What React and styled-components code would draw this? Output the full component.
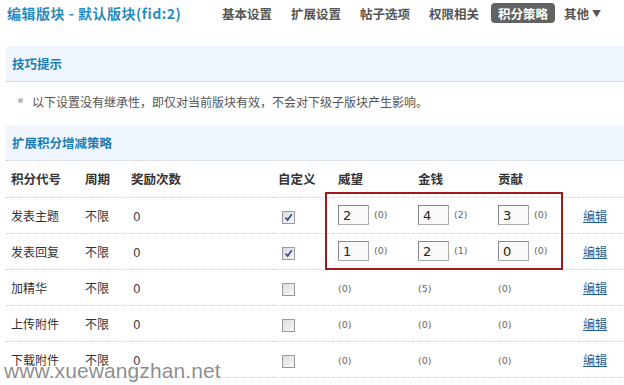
import React from "react";
import styled, { createGlobalStyle } from "styled-components";

const Global = createGlobalStyle`
  html, body { margin: 0; padding: 0; background: #fff; }
  body { font-family: "Noto Sans CJK SC", "Liberation Sans", sans-serif; font-size: 12px; color: #333; overflow: hidden; }
`;

const Page = styled.div`
  position: relative;
  width: 624px;
  height: 385px;
  overflow: hidden;
  padding-left: 6px;
  box-sizing: border-box;
`;

const TopBar = styled.div`
  height: 46px;
  display: flex;
  align-items: flex-start;
  padding-top: 3px;
  box-sizing: border-box;
`;

const Title = styled.h1`
  margin: 0 0 0 1px;
  font-size: 14px;
  line-height: 20px;
  font-weight: bold;
  color: #2a8cc0;
  letter-spacing: 0.5px;
  width: 208px;
  white-space: nowrap;
`;

const Nav = styled.nav`
  display: flex;
  gap: 2px;
  align-items: center;
`;

const NavItem = styled.span`
  display: inline-flex;
  align-items: center;
  height: 20px;
  padding: 0 7px;
  border-radius: 4px;
  font-weight: bold;
  font-size: 12.5px;
  color: ${(p) => (p.$active ? "#fff" : "#555")};
  background: ${(p) => (p.$active ? "#626262" : "transparent")};
  margin-right: ${(p) => (p.$gap ? p.$gap : 0)}px;
  white-space: nowrap;
`;

const Caret = styled.span`
  font-size: 9px;
  margin-left: 3px;
  color: #555;
`;

const SectionHead = styled.div`
  height: 36px;
  background: #eff6fd;
  border-bottom: 1px dotted #bfd0dd;
  box-sizing: border-box;
  display: flex;
  align-items: center;
  padding-left: 6px;
  font-weight: bold;
  font-size: 12.5px;
  color: #1c7db4;
`;

const TipRow = styled.div`
  height: 43px;
  display: flex;
  align-items: center;
  padding-left: 12px;
  padding-bottom: 4px;
  box-sizing: border-box;
  color: #555;
  font-size: 12px;
`;

const Bullet = styled.span`
  width: 5px;
  height: 5px;
  border-radius: 50%;
  background: #bbb;
  margin-right: 9px;
  margin-top: -2px;
`;

const Table = styled.table`
  border-collapse: collapse;
  table-layout: fixed;
  width: 618px;
`;

const Th = styled.th`
  height: 36px;
  text-align: left;
  padding: 0 0 0 5px;
  font-weight: bold;
  font-size: 12.5px;
  color: #333;
  border-bottom: 1px dotted #c9d6e0;
  box-sizing: border-box;
`;

const Td = styled.td`
  height: 36px;
  padding: 0 0 0 5px;
  border-bottom: 1px dotted #c9d6e0;
  box-sizing: border-box;
  white-space: nowrap;
  color: #333;
`;

const Num = styled.span`
  font-family: "DejaVu Sans", "Liberation Sans", sans-serif;
  font-size: 12px;
  color: #444;
  padding-left: 2px;
`;

const NumInput = styled.span`
  display: inline-flex;
  align-items: center;
  width: 31px;
  height: 20px;
  box-sizing: border-box;
  padding-left: 4px;
  border: 1px solid #aaa;
  border-top-color: #888;
  border-left-color: #888;
  background: #f9f9f9;
  font-family: "DejaVu Sans", "Liberation Sans", sans-serif;
  font-size: 13px;
  color: #222;
  vertical-align: middle;
`;

const Small = styled.span`
  font-family: "DejaVu Sans", "Liberation Sans", sans-serif;
  font-size: 9.5px;
  color: #666;
  margin-left: ${(p) => (p.$inline ? 5 : 0)}px;
  vertical-align: middle;
  position: relative;
  top: -1px;
`;

const Box = styled.span`
  display: inline-flex;
  align-items: center;
  justify-content: center;
  width: 11px;
  height: 11px;
  margin-left: 4px;
  border: 1px solid #9a9a9a;
  background: linear-gradient(135deg, #dcdcdc, #f8f8f8);
  vertical-align: middle;
`;

const EditLink = styled.a`
  color: #235f94;
  text-decoration: underline;
  font-size: 12px;
`;

const RedFrame = styled.div`
  position: absolute;
  left: 325px;
  top: 192px;
  width: 238px;
  height: 78px;
  border: 2px solid #a01a1a;
  box-sizing: border-box;
  pointer-events: none;
`;

const Watermark = styled.div`
  position: absolute;
  left: 4px;
  top: 359px;
  font-family: "Liberation Sans", Arial, sans-serif;
  font-size: 21px;
  color: rgba(120, 120, 120, 0.85);
  text-shadow: 0 0 2px #fff, 0 0 2px #fff;
  letter-spacing: 0.1px;
`;

const Check = ({ checked }) => (
  <Box>
    {checked && (
      <svg width="9" height="9" viewBox="0 0 9 9">
        <path d="M1.5 4.5 L3.6 7 L7.8 1.2" stroke="#3a4fa0" strokeWidth="1.8" fill="none" />
      </svg>
    )}
  </Box>
);

const rows = [
  { name: "发表主题", custom: true, v: [["2", "(0)"], ["4", "(2)"], ["3", "(0)"]] },
  { name: "发表回复", custom: true, v: [["1", "(0)"], ["2", "(1)"], ["0", "(0)"]] },
  { name: "加精华", custom: false, v: [[null, "(0)"], [null, "(5)"], [null, "(0)"]] },
  { name: "上传附件", custom: false, v: [[null, "(0)"], [null, "(0)"], [null, "(0)"]] },
  { name: "下载附件", custom: false, v: [[null, "(0)"], [null, "(0)"], [null, "(0)"]] },
];

const navs = ["基本设置", "扩展设置", "帖子选项", "权限相关"];

export default function App() {
  return (
    <Page>
      <Global />
      <TopBar>
        <Title>编辑版块 - 默认版块(fid:2)</Title>
        <Nav>
          {navs.map((n) => (
            <NavItem key={n} $gap={3}>{n}</NavItem>
          ))}
          <NavItem $active>积分策略</NavItem>
          <NavItem>
            其他<Caret>▼</Caret>
          </NavItem>
        </Nav>
      </TopBar>
      <SectionHead>技巧提示</SectionHead>
      <TipRow>
        <Bullet />
        以下设置没有继承性，即仅对当前版块有效，不会对下级子版块产生影响。
      </TipRow>
      <SectionHead>扩展积分增减策略</SectionHead>
      <Table>
        <colgroup>
          <col style={{ width: 74 }} />
          <col style={{ width: 46 }} />
          <col style={{ width: 147 }} />
          <col style={{ width: 60 }} />
          <col style={{ width: 80 }} />
          <col style={{ width: 80 }} />
          <col style={{ width: 85 }} />
          <col style={{ width: 46 }} />
        </colgroup>
        <thead>
          <tr>
            <Th>积分代号</Th>
            <Th>周期</Th>
            <Th>奖励次数</Th>
            <Th>自定义</Th>
            <Th>威望</Th>
            <Th>金钱</Th>
            <Th>贡献</Th>
            <Th />
          </tr>
        </thead>
        <tbody>
          {rows.map((r) => (
            <tr key={r.name}>
              <Td>{r.name}</Td>
              <Td>不限</Td>
              <Td><Num>0</Num></Td>
              <Td><Check checked={r.custom} /></Td>
              {r.v.map(([val, sm], i) => (
                <Td key={i}>
                  {val !== null ? (
                    <>
                      <NumInput>{val}</NumInput>
                      <Small $inline>{sm}</Small>
                    </>
                  ) : (
                    <Small>{sm}</Small>
                  )}
                </Td>
              ))}
              <Td><EditLink href="#">编辑</EditLink></Td>
            </tr>
          ))}
        </tbody>
      </Table>
      <RedFrame />
      <Watermark>www.xuewangzhan.net</Watermark>
    </Page>
  );
}
